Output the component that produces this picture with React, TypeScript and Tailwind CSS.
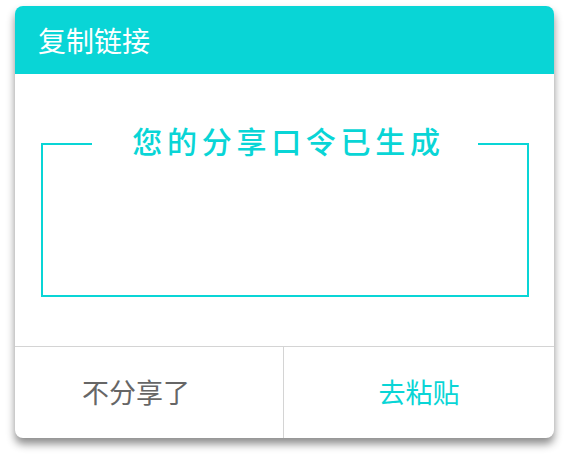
export default function App() {
  return (
    <div
      className="w-[569px] h-[463px] bg-white pt-[6px] px-[15px]"
      style={{ fontFamily: '"Noto Sans CJK SC", "Noto Sans", sans-serif' }}
    >
      <div className="w-[539px] rounded-[8px] overflow-hidden bg-white shadow-[0_6px_9px_rgba(0,0,0,0.45)]">
        {/* header */}
        <div className="h-[68px] bg-[#09d5d6] flex items-center px-[23px] text-[28px] text-white">
          复制链接
        </div>

        {/* body */}
        <div className="h-[272px] pt-[48px] px-[26px]">
          <fieldset className="w-[488px] h-[175px] border-2 border-[#09d5d6]">
            <legend className="mx-auto pl-[40px] pr-[33px] pb-[7px] text-[30px] leading-[36px] font-medium text-[#09d5d6] tracking-[4.7px]">
              您的分享口令已生成
            </legend>
          </fieldset>
        </div>

        {/* buttons */}
        <div className="h-[92px] border-t border-[#d4d4d4] flex">
          <button className="w-[269px] pr-[26px] border-r border-[#d4d4d4] text-[27px] text-[#666666]">不分享了</button>
          <button className="flex-1 text-[27px] text-[#09d5d6]">去粘贴</button>
        </div>
      </div>
    </div>
  );
}
